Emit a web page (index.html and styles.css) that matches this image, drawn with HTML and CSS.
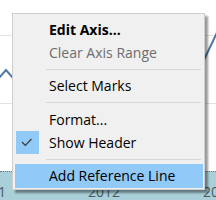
FILE: index.html
```html
<!DOCTYPE html>
<html>
<head>
<meta charset="utf-8">
<link rel="stylesheet" href="styles.css">
</head>
<body>
<div class="page">
  <div class="chart">
    <svg class="plot" width="216" height="171" viewBox="0 0 216 171">
      <line x1="0" y1="35.5" x2="216" y2="35.5" stroke="#e3e3e3" stroke-width="1"/>
      <line x1="0" y1="103.5" x2="216" y2="103.5" stroke="#e3e3e3" stroke-width="1"/>
      <polyline points="-2,79 6,70 20,86 60,100" fill="none" stroke="#4e79a7" stroke-width="2"/>
      <polyline points="180,110 203,62 222,22" fill="none" stroke="#4e79a7" stroke-width="2"/>
    </svg>
  </div>
  <div class="axis">
    <span class="year y2011">2011</span>
    <span class="year y2012">2012</span>
    <span class="year y2013">2013</span>
  </div>

  <div class="menu">
    <div class="item bold">Edit Axis...</div>
    <div class="item disabled">Clear Axis Range</div>
    <div class="sep"></div>
    <div class="item">Select Marks</div>
    <div class="sep sep2"></div>
    <div class="item">Format...</div>
    <div class="item">
      <span class="check">
        <svg width="23" height="23" viewBox="0 0 23 23"><polyline points="6,11 9.3,14.5 15.5,8" fill="none" stroke="#3a3a3a" stroke-width="1.2"/></svg>
      </span>
      Show Header
    </div>
    <div class="sep"></div>
    <div class="item active">Add Reference Line</div>
  </div>
</div>
</body>
</html>
```

FILE: styles.css
```css
html, body {
  margin: 0;
  padding: 0;
}
body {
  width: 216px;
  height: 200px;
  overflow: hidden;
  background: #ffffff;
  font-family: "Open Sans", "Noto Sans", sans-serif;
}
.page {
  position: relative;
  width: 216px;
  height: 200px;
  display: flex;
  flex-direction: column;
}
.chart {
  height: 171px;
  flex: none;
}
.plot {
  display: block;
}
.axis {
  flex: 1;
  background: #a9d0d8;
  border-top: 1px dotted #6a7a7e;
  position: relative;
  display: flex;
  align-items: flex-end;
  font-size: 14px;
  color: #4d5a5e;
}
.year {
  position: absolute;
  bottom: -1px;
  line-height: 18px;
}
.y2011 { left: -26px; }
.y2012 { left: 88px; }
.y2013 { left: 203px; }

.menu {
  position: absolute;
  left: 12px;
  top: 13px;
  width: 188px;
  padding: 4px 1px 1px 2px;
  background: #f0f0f0;
  border: 1px solid #cfcfcf;
  box-shadow: 3px 3px 2px rgba(0, 0, 0, 0.4);
  font-size: 14px;
  color: #000;
}
.item {
  height: 23px;
  line-height: 23px;
  padding-left: 34px;
  position: relative;
  white-space: nowrap;
}
.bold { font-weight: 700; }
.disabled { color: #6d6d6d; }
.active {
  background: #91c9f7;
  height: 24px;
  line-height: 24px;
}
.sep {
  height: 10px;
  margin-left: 31px;
  margin-right: 2px;
  display: flex;
  align-items: center;
}
.sep::after {
  content: "";
  display: block;
  height: 1px;
  width: 100%;
  background: #d7d7d7;
}
.sep2 { height: 11px; }
.check {
  position: absolute;
  left: 1px;
  top: 0;
  width: 23px;
  height: 23px;
  background: #91c9f7;
}
.check svg { display: block; }
```
